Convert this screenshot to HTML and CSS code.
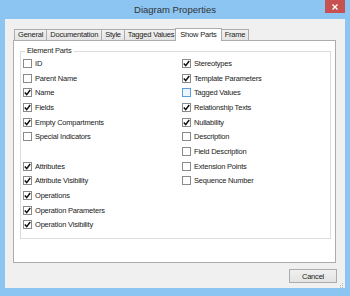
FILE: index.html
```html
<!DOCTYPE html>
<html lang="en">
  <head>
    <meta charset="UTF-8" />
    <meta name="viewport" content="width=device-width, initial-scale=1.0" />
    <title>Diagram Properties</title>
    <link rel="stylesheet" href="styles.css">
  </head>
  <body>
    <div class="window">
      <div class="titlebar">
        <span></span>
        <span class="title">Diagram Properties</span>
        <div class="close-button">
          <svg width="6" height="6" viewBox="0 0 6 6">
            <path d="M0.5 0.5 L5.5 5.5 M5.5 0.5 L0.5 5.5" stroke="#fff" stroke-width="1.4" />
          </svg>
        </div>
      </div>

      <div class="client">
        <div class="tabs">
          <div class="tab">General</div>
          <div class="tab">Documentation</div>
          <div class="tab">Style</div>
          <div class="tab">Tagged Values</div>
          <div class="tab active">Show Parts</div>
          <div class="tab">Frame</div>
        </div>

        <div class="tab-panel">
          <fieldset class="group">
            <legend>Element Parts</legend>
            <div class="options">
              <div class="column">
                <label class="option"><span class="box"></span>ID</label>
                <label class="option"><span class="box"></span>Parent Name</label>
                <label class="option"><span class="box checked"></span>Name</label>
                <label class="option"><span class="box checked"></span>Fields</label>
                <label class="option"><span class="box checked"></span>Empty Compartments</label>
                <label class="option"><span class="box"></span>Special Indicators</label>
                <div class="option"></div>
                <label class="option"><span class="box checked"></span>Attributes</label>
                <label class="option"><span class="box checked"></span>Attribute Visibility</label>
                <label class="option"><span class="box checked"></span>Operations</label>
                <label class="option"><span class="box checked"></span>Operation Parameters</label>
                <label class="option"><span class="box checked"></span>Operation Visibility</label>
              </div>
              <div class="column">
                <label class="option"><span class="box checked"></span>Stereotypes</label>
                <label class="option"><span class="box checked"></span>Template Parameters</label>
                <label class="option"><span class="box hover"></span>Tagged Values</label>
                <label class="option"><span class="box checked"></span>Relationship Texts</label>
                <label class="option"><span class="box checked"></span>Nullability</label>
                <label class="option"><span class="box"></span>Description</label>
                <label class="option"><span class="box"></span>Field Description</label>
                <label class="option"><span class="box"></span>Extension Points</label>
                <label class="option"><span class="box"></span>Sequence Number</label>
              </div>
            </div>
          </fieldset>
        </div>

        <div class="footer">
          <button class="btn" type="button">Cancel</button>
          <svg class="grip" width="5" height="5" viewBox="0 0 5 5">
            <rect x="3" y="0" width="1" height="1" fill="#b5b5b5" />
            <rect x="1" y="2" width="1" height="1" fill="#b5b5b5" />
            <rect x="3" y="2" width="1" height="1" fill="#b5b5b5" />
            <rect x="-1" y="4" width="1" height="1" fill="#b5b5b5" />
            <rect x="1" y="4" width="1" height="1" fill="#b5b5b5" />
            <rect x="3" y="4" width="1" height="1" fill="#b5b5b5" />
          </svg>
        </div>
      </div>
    </div>

    <script>
      // draw the tick in every checked box
      document.querySelectorAll(".box.checked").forEach((box) => {
        box.innerHTML =
          '<svg width="7" height="7" viewBox="0 0 7 7"><path d="M0.8 3.6 L2.7 5.6 L6.2 1" fill="none" stroke="#111" stroke-width="1.5"/></svg>';
      });
    </script>
  </body>
</html>
```

FILE: styles.css
```css
body {
  margin: 0;
  font-family: "Liberation Sans", Arial, sans-serif;
  font-size: 7.5px;
  letter-spacing: -0.2px;
  color: #222;
}
.window {
  width: 350px;
  height: 296px;
  box-sizing: border-box;
  padding: 0 5px 8px 5px;
  background: #8cc4f2;
  display: flex;
  flex-direction: column;
}
.titlebar {
  height: 19px;
  margin: 0 -5px;
  display: grid;
  grid-template-columns: 25px 1fr 25px;
  align-items: start;
}
.title {
  text-align: center;
  font-size: 9.5px;
  letter-spacing: 0;
  line-height: 20px;
  color: #333;
}
.close-button {
  width: 20px;
  height: 13px;
  background: #c75050;
  display: flex;
  align-items: center;
  justify-content: center;
}
.close-button svg {
  display: block;
}
.client {
  flex: 1;
  background: #f0f0f0;
  padding: 9px 9px 0 8px;
  display: flex;
  flex-direction: column;
}
.tabs {
  height: 12px;
  display: flex;
  align-items: flex-end;
  padding-left: 1px;
  position: relative;
  z-index: 1;
}
.tab {
  height: 10px;
  line-height: 10px;
  padding: 0 3px;
  border: 1px solid #acacac;
  border-bottom: none;
  margin-right: -1px;
  background: linear-gradient(#f2f2f2, #e4e4e4);
  white-space: nowrap;
}
.tab.active {
  height: 12px;
  line-height: 11px;
  padding: 0 4px;
  margin: 0 -1px -1px -2px;
  background: #fff;
}
.tab-panel {
  height: 223px;
  box-sizing: border-box;
  background: #fff;
  border: 1px solid #acacac;
  padding: 5px 4px 0 6px;
}
.group {
  margin: 0;
  padding: 0 0 6px 2px;
  border: 1px solid #dcdcdc;
}
.group legend {
  margin-left: 2px;
  padding: 0 2px;
  line-height: 10px;
}
.options {
  display: grid;
  grid-template-columns: 159px 1fr;
}
.column {
  display: flex;
  flex-direction: column;
}
.option {
  height: 14.7px;
  display: flex;
  align-items: center;
  gap: 3px;
  white-space: nowrap;
}
.box {
  width: 9px;
  height: 9px;
  box-sizing: border-box;
  border: 1px solid #8a8a8a;
  background: #fff;
  display: flex;
  align-items: center;
  justify-content: center;
}
.box svg {
  display: block;
}
.box.hover {
  border-color: #5b9ee0;
  background: #eef5fc;
}
.footer {
  flex: 1;
  display: flex;
  justify-content: flex-end;
  align-items: flex-start;
  padding-top: 6px;
  position: relative;
}
.btn {
  width: 48px;
  height: 14px;
  padding: 0;
  margin-right: -1px;
  border: 1px solid #acacac;
  background: linear-gradient(#f0f0f0, #e3e3e3);
  font-family: inherit;
  font-size: 7.5px;
  letter-spacing: -0.2px;
  color: #222;
}
.grip {
  position: absolute;
  right: -8px;
  bottom: 0;
}
```
